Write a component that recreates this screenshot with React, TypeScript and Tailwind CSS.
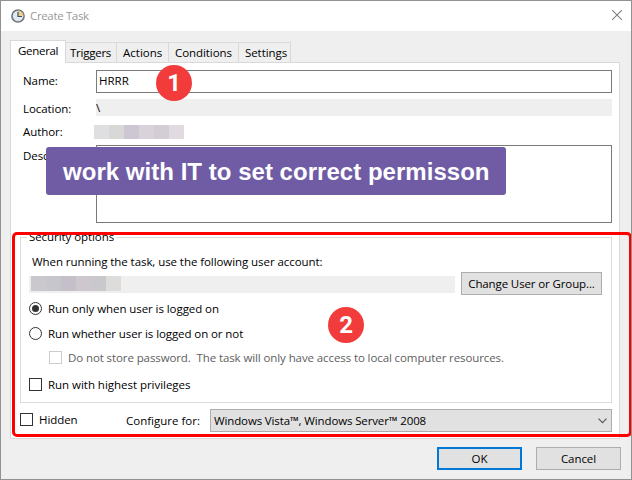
import type { ReactNode } from "react";

const authorBlocks = ["bg-[#dfdfe1]", "bg-[#d8d8d9]", "bg-[#cdc6d3]", "bg-[#d9d2da]", "bg-[#d3ced5]", "bg-[#e1dbe1]"];
const accountBlocks = ["bg-[#cac8cc]", "bg-[#c8c6cd]", "bg-[#c4bfc9]", "bg-[#cec7cd]", "bg-[#c9c8cd]", "bg-[#dddcda]"];

function Txt({ children, className = "" }: { children: ReactNode; className?: string }) {
  return <span className={`block h-4 leading-[18px] whitespace-pre ${className}`}>{children}</span>;
}

function Blocks({ colors, className = "" }: { colors: string[]; className?: string }) {
  return (
    <div className={`flex ${className}`}>
      {colors.map((c) => (
        <div key={c} className={`w-[15px] ${c}`} />
      ))}
    </div>
  );
}

function Radio({ checked }: { checked?: boolean }) {
  return (
    <span className="mt-[2px] flex h-[13px] w-[13px] items-center justify-center rounded-full border border-[#333] bg-white">
      {checked && <span className="h-[7px] w-[7px] rounded-full bg-[#333]" />}
    </span>
  );
}

function Check({ className = "border-[#333]" }: { className?: string }) {
  return <span className={`mt-[2px] block h-[13px] w-[13px] border bg-white ${className}`} />;
}

function Badge({ children, className }: { children: ReactNode; className: string }) {
  return (
    <div
      className={`absolute flex h-9 w-9 items-center justify-center rounded-full bg-[#f23c3c] font-[Roboto,sans-serif] text-[24px] leading-none font-bold text-white ${className}`}
    >
      {children}
    </div>
  );
}

export default function App() {
  return (
    <div className="relative flex h-[480px] w-[632px] flex-col overflow-hidden border border-[#929292] bg-[#efefef] font-['Open_Sans','Noto_Sans',sans-serif] text-[11.5px] tracking-[-0.07px] text-black">
      <header className="flex h-[30px] shrink-0 bg-white pl-[10px]">
        <svg className="mt-[8px] h-[14px] w-[14px]" viewBox="0 0 14 14">
          <circle cx="7" cy="7" r="6.1" fill="#dfeaf2" stroke="#6c6e70" strokeWidth="1.5" />
          <path d="M7 7V1.6A5.4 5.4 0 0 1 12.4 7Z" fill="#efd08a" />
          <circle cx="7" cy="7" r="5" fill="none" stroke="#a9b8c2" strokeWidth=".7" strokeDasharray="1 1.6" />
          <path d="M7 3V7.5H11" fill="none" stroke="#3f4e5a" strokeWidth="1.2" />
        </svg>
        <Txt className="mt-[6px] ml-[5px] tracking-[-0.35px] text-[#999]">Create Task</Txt>
        <svg className="mt-[9px] mr-[9px] ml-auto h-[10px] w-[10px]" viewBox="0 0 10 10">
          <path d="M0 0L10 10M10 0L0 10" stroke="#808080" strokeWidth="1.1" />
        </svg>
      </header>

      <nav className="mt-[9px] ml-[9px] flex h-[22px] shrink-0 items-end">
        <div className="z-10 -mb-px h-[23px] w-[56px] border border-b-0 border-[#d9d9d9] bg-white pt-[1px] pl-[7px]">
          <Txt className="tracking-[-0.3px]">General</Txt>
        </div>
        <div className="h-[20px] w-[51px] border-t border-r border-[#d9d9d9] pt-[1px] pl-[4px]"><Txt className="tracking-[-0.25px]">Triggers</Txt></div>
        <div className="h-[20px] w-[52px] border-t border-r border-[#d9d9d9] pt-[1px] pl-[6px]"><Txt className="tracking-normal">Actions</Txt></div>
        <div className="h-[20px] w-[70px] border-t border-r border-[#d9d9d9] pt-[1px] pl-[6px]"><Txt>Conditions</Txt></div>
        <div className="h-[20px] w-[52px] border-t border-r border-[#d9d9d9] pt-[1px] pl-[6px]"><Txt>Settings</Txt></div>
      </nav>

      <main className="ml-[9px] h-[377px] w-[610px] shrink-0 border border-[#d9d9d9] bg-white pt-[7px]">
        <div className="flex h-[23px] pl-3">
          <Txt className="w-[73px] pt-[2px]">Name:</Txt>
          <div className="w-[516px] border border-[#7a7a7a] pt-[1px] pl-[2px]"><Txt className="tracking-normal">HRRR</Txt></div>
        </div>
        <div className="mt-[6px] flex h-[17px] pl-3">
          <Txt className="w-[73px] pt-[1px]">Location:</Txt>
          <div className="w-[516px] bg-[#efefef]"><Txt>\</Txt></div>
        </div>
        <div className="mt-[7px] flex h-4 pl-3">
          <Txt className="w-[71px]">Author:</Txt>
          <Blocks colors={authorBlocks} className="mt-[2px] h-[14px]" />
        </div>
        <div className="mt-[6px] flex h-[78px] pl-3">
          <Txt className="w-[73px] pt-[2px]">Description:</Txt>
          <div className="w-[516px] border border-[#7a7a7a]" />
        </div>

        <section className="mt-[14px] ml-[9px] h-[166px] w-[592px] border border-[#dcdcdc]">
          <Txt className="-mt-[10px] ml-[6px] w-[89px] bg-white pl-[2px]">Security options</Txt>
          <Txt className="mt-[9px] ml-[11px]">When running the task, use the following user account:</Txt>
          <div className="mt-[3px] flex h-[23px] pl-2">
            <div className="mt-[4px] h-[17px] w-[426px] bg-[#efefef] pl-[2px]">
              <Blocks colors={accountBlocks} className="h-[15px]" />
            </div>
            <button className="ml-[6px] flex w-[141px] justify-center border border-[#adadad] bg-[#e1e1e1] pt-[2px]">
              <Txt className="tracking-[-0.12px]">Change User or Group...</Txt>
            </button>
          </div>
          <div className="mt-[5px] flex gap-[6px] pl-2"><Radio checked /><Txt>Run only when user is logged on</Txt></div>
          <div className="mt-[9px] flex gap-[6px] pl-2"><Radio /><Txt className="tracking-[-0.09px]">Run whether user is logged on or not</Txt></div>
          <div className="mt-[8px] flex gap-[6px] pl-7 text-[#606060]">
            <Check className="border-[#ccc]" />
            <Txt className="tracking-[-0.1px]">{"Do not store password.  The task will only have access to local computer resources."}</Txt>
          </div>
          <div className="mt-[11px] flex gap-[6px] pl-2"><Check /><Txt className="tracking-[-0.03px]">Run with highest privileges</Txt></div>
        </section>

        <div className="mt-[6px] flex h-[23px] pl-[9px]">
          <div className="flex w-[106px] gap-[6px] pt-[2px]"><Check /><Txt>Hidden</Txt></div>
          <Txt className="w-[84px] pt-[3px] tracking-normal">Configure for:</Txt>
          <div className="flex w-[402px] justify-between border border-[#adadad] bg-[#e1e1e1] pt-[2px] pl-[3px]">
            <Txt className="tracking-[-0.13px]">Windows Vista™, Windows Server™ 2008</Txt>
            <svg className="mt-[6px] mr-[4px] h-[6px] w-[9px]" viewBox="0 0 9 6">
              <path d="M.5 .7L4.5 4.7L8.5 .7" fill="none" stroke="#555" strokeWidth="1.1" />
            </svg>
          </div>
        </div>
      </main>

      <footer className="mt-[8px] flex h-[23px] shrink-0 justify-end gap-[14px] pr-[10px]">
        <button className="flex w-[85px] justify-center border-2 border-[#0078d7] bg-[#e1e1e1] pt-[1px]"><Txt>OK</Txt></button>
        <button className="flex w-[85px] justify-center border border-[#adadad] bg-[#e1e1e1] pt-[2px]"><Txt>Cancel</Txt></button>
      </footer>

      <div className="absolute top-[231px] left-[11px] z-20 h-[205px] w-[620px] rounded-[5px] border-[3px] border-[#ff0000]" />
      <div className="absolute top-[146px] left-[45px] z-20 flex h-12 w-[460px] items-center rounded-[3px] bg-[#6f5ca5] pt-px pl-[17px] font-['Liberation_Sans',Arial,sans-serif] text-[24px] leading-none font-bold tracking-[0.03px] whitespace-pre text-white">
        work with IT to set correct permisson
      </div>
      <Badge className="top-[64px] left-[155px]">1</Badge>
      <Badge className="top-[306px] left-[327px]">2</Badge>
    </div>
  );
}
